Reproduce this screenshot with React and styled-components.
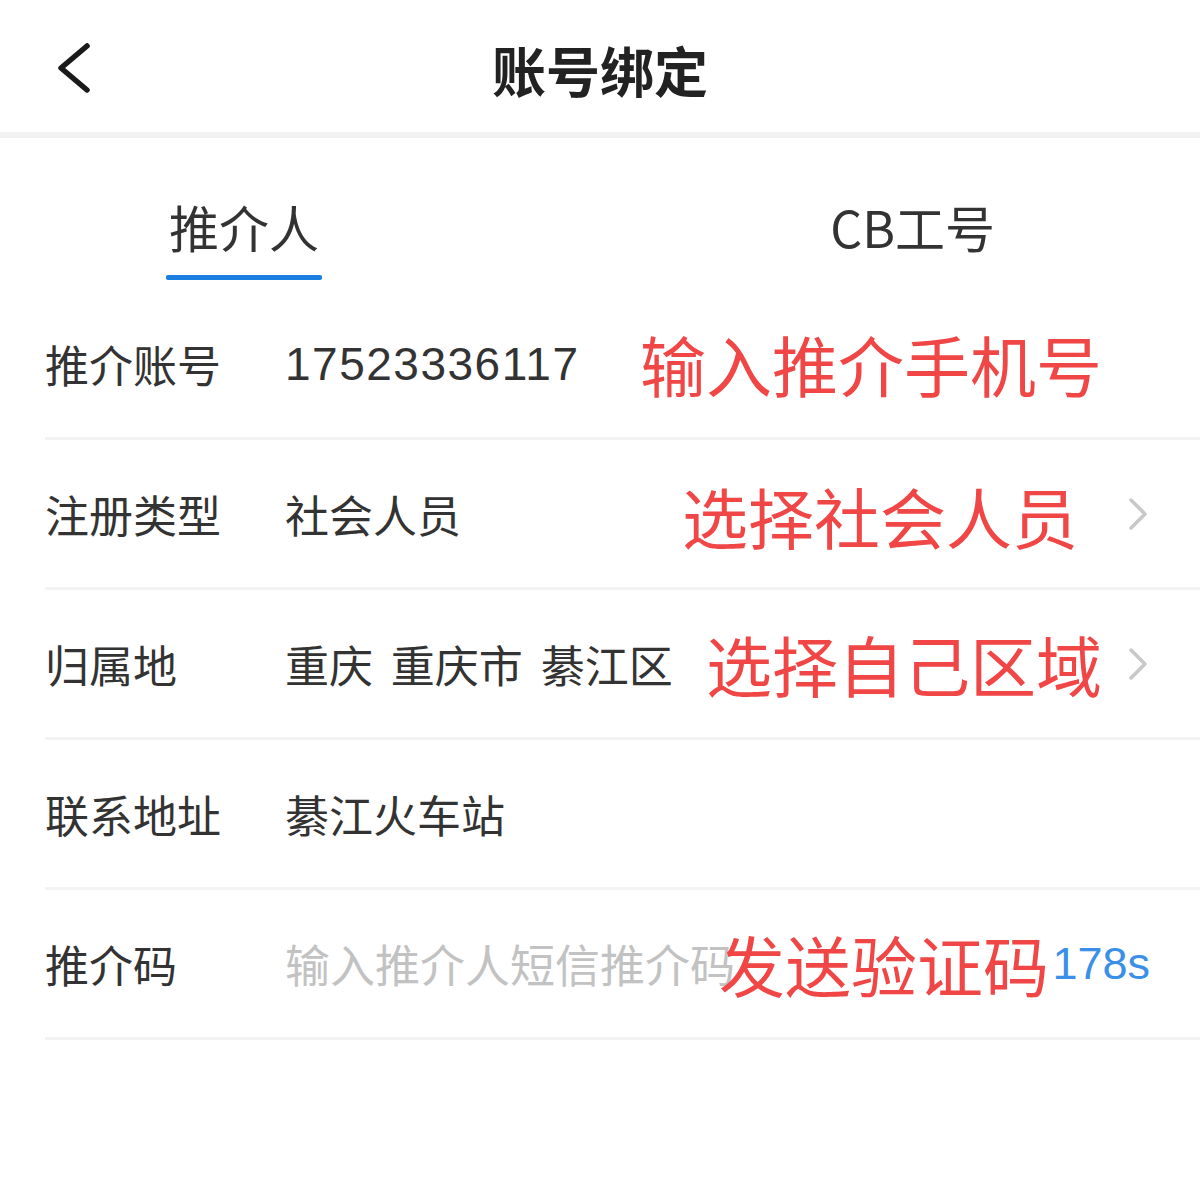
import React from "react";
import styled, { createGlobalStyle } from "styled-components";

const Global = createGlobalStyle`
  html, body { margin: 0; padding: 0; background: #fff; }
  body { font-family: "Noto Sans CJK SC", "Noto Sans", sans-serif; color: #333; }
  * { box-sizing: border-box; }
`;

const Page = styled.div`
  width: 1200px;
  min-height: 1178px;
  background: #fff;
  display: flex;
  flex-direction: column;
`;

const Header = styled.header`
  height: 132px;
  display: flex;
  align-items: center;
  justify-content: center;
  position: relative;
  border-bottom: 6px solid #f2f2f2;
  box-sizing: content-box;
`;

const BackBtn = styled.div`
  position: absolute;
  left: 56px;
  top: 42px;
  width: 36px;
  height: 52px;
  display: flex;
`;

const Title = styled.h1`
  margin: 0;
  font-size: 54px;
  font-weight: 700;
  color: #222;
  line-height: 1;
  margin-top: 8px;
`;

const Tabs = styled.div`
  height: 152px;
  display: flex;
  align-items: flex-end;
`;

const Tab = styled.div`
  display: flex;
  flex-direction: column;
  align-items: center;
  margin-left: ${(p) => p.$ml};
  margin-right: ${(p) => p.$mr || "0"};
  font-size: 50px;
  line-height: 1;
  color: #333;
  padding-bottom: 10px;
`;

const TabText = styled.span`
  padding-bottom: 24px;
`;

const Underline = styled.div`
  height: 5px;
  width: 156px;
  background: ${(p) => (p.$active ? "#1a7ee0" : "transparent")};
  border-radius: 2px;
`;

const Row = styled.div`
  position: relative;
  height: 150px;
  margin-left: 45px;
  padding-right: 50px;
  display: flex;
  align-items: center;
  border-bottom: 3px solid #f3f3f3;
`;

const Label = styled.div`
  width: 240px;
  flex-shrink: 0;
  font-size: 44px;
  color: #333;
  line-height: 1;
`;

const Value = styled.div`
  font-size: ${(p) => (p.$num ? "46px" : p.$placeholder ? "45px" : "44px")};
  color: ${(p) => (p.$placeholder ? "#c2c2c2" : "#333")};
  letter-spacing: ${(p) => (p.$num ? "1.5px" : "0")};
  word-spacing: ${(p) => p.$ws || "0"};
  font-family: ${(p) =>
    p.$num ? '"Liberation Sans", "Noto Sans CJK SC", sans-serif' : "inherit"};
  line-height: 1;
  white-space: pre;
`;

const Annotation = styled.div`
  position: absolute;
  left: ${(p) => p.$left}px;
  top: ${(p) => p.$top}px;
  font-size: 66px;
  line-height: 1;
  color: #f04646;
  white-space: nowrap;
`;

const Spacer = styled.div`
  flex: 1;
`;

const Countdown = styled.div`
  font-family: "Liberation Sans", Arial, sans-serif;
  font-size: 45px;
  color: #3a8fe8;
  line-height: 1;
  position: relative;
  z-index: 1;
`;

const ChevronWrap = styled.div`
  width: 20px;
  height: 34px;
  display: flex;
  margin-right: 2px;
`;

const BackIcon = () => (
  <svg width="36" height="52" viewBox="0 0 36 52">
    <polyline
      points="31,4 5,26 31,48"
      fill="none"
      stroke="#1a1a1a"
      strokeWidth="5.5"
      strokeLinecap="round"
      strokeLinejoin="round"
    />
  </svg>
);

const Chevron = () => (
  <ChevronWrap>
    <svg width="20" height="34" viewBox="0 0 20 34">
      <polyline
        points="3,3 17,17 3,31"
        fill="none"
        stroke="#c8c8c8"
        strokeWidth="3.5"
        strokeLinecap="round"
        strokeLinejoin="round"
      />
    </svg>
  </ChevronWrap>
);

export default function App() {
  return (
    <>
      <Global />
      <Page>
        <Header>
          <BackBtn>
            <BackIcon />
          </BackBtn>
          <Title>账号绑定</Title>
        </Header>

        <Tabs>
          <Tab $ml="166px">
            <TabText>推介人</TabText>
            <Underline $active />
          </Tab>
          <Tab $ml="auto" $mr="205px">
            <TabText>CB工号</TabText>
            <Underline />
          </Tab>
        </Tabs>

        <Row>
          <Label>推介账号</Label>
          <Value $num>17523336117</Value>
          <Annotation $left={595} $top={40}>输入推介手机号</Annotation>
        </Row>

        <Row>
          <Label>注册类型</Label>
          <Value>社会人员</Value>
          <Annotation $left={637} $top={42}>选择社会人员</Annotation>
          <Spacer />
          <Chevron />
        </Row>

        <Row>
          <Label>归属地</Label>
          <Value $ws="8px">重庆 重庆市 綦江区</Value>
          <Annotation $left={661} $top={40}>选择自己区域</Annotation>
          <Spacer />
          <Chevron />
        </Row>

        <Row>
          <Label>联系地址</Label>
          <Value>綦江火车站</Value>
        </Row>

        <Row>
          <Label>推介码</Label>
          <Value $placeholder>输入推介人短信推介码</Value>
          <Annotation $left={674} $top={40}>发送验证码</Annotation>
          <Spacer />
          <Countdown>178s</Countdown>
        </Row>
      </Page>
    </>
  );
}
